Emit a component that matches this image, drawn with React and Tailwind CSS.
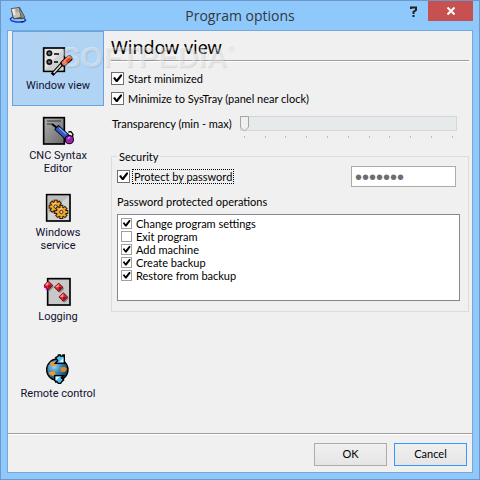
import React, { useState } from "react";

const ViewIcon = () => (
  <svg width="32" height="30" viewBox="126 135 96 90" aria-hidden="true">
    <rect x="131" y="141" width="62" height="70" fill="#e4e4e4" stroke="#000" strokeWidth="5" />
    <path d="M134 208L190 144V208Z" fill="#d0d0d0" />
    <circle cx="148" cy="157" r="9" fill="#111" />
    <circle cx="148" cy="157" r="4" fill="#6b7075" />
    <circle cx="148" cy="183" r="9" fill="#111" />
    <circle cx="148" cy="183" r="4" fill="#6b7075" />
    <path d="M162 159H177M162 183H174" stroke="#000" strokeWidth="4" />
    <path d="M188 186L160 217" stroke="#000" strokeWidth="11" strokeLinecap="square" />
    <path d="M188 186L161 216" stroke="#d8d8d0" strokeWidth="5" />
    <path d="M191 187L208 172" stroke="#000" strokeWidth="19" strokeLinecap="round" />
    <path d="M192 186L208 172" stroke="#e04415" strokeWidth="14" strokeLinecap="round" />
    <path d="M192 180L206 168" stroke="#ff9468" strokeWidth="4" />
  </svg>
);

const SyntaxIcon = () => (
  <svg width="32" height="30" viewBox="126 36 96 90" aria-hidden="true">
    <defs>
      <linearGradient id="plate" x1="0" y1="0" x2="1" y2="1">
        <stop offset="0" stopColor="#b0b0b0" />
        <stop offset="1" stopColor="#686868" />
      </linearGradient>
    </defs>
    <rect x="131" y="41" width="62" height="79" fill="url(#plate)" stroke="#000" strokeWidth="5" />
    <path d="M141 51H183M141 60H156" stroke="#333" strokeWidth="3" />
    <path d="M156 60L178 77" stroke="#000" strokeWidth="6" />
    <path d="M176 76L204 101" stroke="#000" strokeWidth="19" strokeLinecap="square" />
    <path d="M176 76L198 96" stroke="#2f5ac8" strokeWidth="14" strokeLinecap="square" />
    <path d="M178 72L198 90" stroke="#78a4f0" strokeWidth="4" />
    <path d="M205 84L213 83L219 91L217 99" fill="none" stroke="#000" strokeWidth="4" />
    <circle cx="208" cy="107" r="14" fill="#000" />
    <circle cx="208" cy="107" r="11" fill="#9d20b0" />
    <path d="M203 105L210 99" stroke="#e080f0" strokeWidth="4" />
  </svg>
);

const teeth = [0, 45, 90, 135];

const Gear = ({ x, y }) => (
  <g transform={`translate(${x} ${y})`}>
    {teeth.map((a) => (
      <rect key={a} x="-6" y="-21" width="12" height="42" fill="#2a1c04" transform={`rotate(${a})`} />
    ))}
    <circle r="16" fill="#2a1c04" />
    {teeth.map((a) => (
      <rect key={a} x="-3" y="-18" width="6" height="36" fill="#f2a72c" transform={`rotate(${a})`} />
    ))}
    <circle r="13" fill="#f2a72c" />
    <path d="M-9 -5A10 10 0 0 1 2 -10" fill="none" stroke="#ffd888" strokeWidth="3" />
    <circle r="5" fill="#d8d8d8" stroke="#4a3208" strokeWidth="3" />
  </g>
);

const ServiceIcon = () => (
  <svg width="32" height="30" viewBox="126 267 96 90" aria-hidden="true">
    <rect x="140" y="272" width="70" height="79" fill="#d2d2d2" stroke="#000" strokeWidth="5" />
    <path d="M143 275H208L143 330Z" fill="#bdbdbd" />
    <Gear x={167} y={308} />
    <Gear x={184} y={324} />
  </svg>
);

const Diamond = ({ x, y }) => (
  <g transform={`translate(${x} ${y})`}>
    <path d="M4 -9L17 4L4 17L-8 5Z" fill="#888" />
    <path d="M0 -14L14 0L0 14L-14 0Z" fill="#3a0000" />
    <path d="M0 -12L12 0L0 12L-12 0Z" fill="#e02832" />
    <path d="M0 -11L-10 0H0Z" fill="#ff9a9a" />
    <path d="M0 0H10L0 10Z" fill="#980a14" />
  </g>
);

const LoggingIcon = () => (
  <svg width="32" height="30" viewBox="126 51 96 90" aria-hidden="true">
    <rect x="143" y="56" width="67" height="79" fill="#c8c8c8" stroke="#000" strokeWidth="5" />
    <path d="M132 78H143V90H137V84H132Z" fill="#f000e0" />
    <Diamond x={145} y={76} />
    <Diamond x={176} y={82} />
    <Diamond x={190} y={111} />
  </svg>
);

const RemoteIcon = () => (
  <svg width="32" height="30" viewBox="126 281 96 90" aria-hidden="true">
    <defs>
      <radialGradient id="globe" cx="0.35" cy="0.35" r="0.7">
        <stop offset="0" stopColor="#9cd4f4" />
        <stop offset="0.45" stopColor="#3a88b8" />
        <stop offset="1" stopColor="#123a5c" />
      </radialGradient>
    </defs>
    <circle cx="172" cy="328" r="32" fill="url(#globe)" stroke="#000" strokeWidth="4" />
    <path d="M152 304L166 304L168 313L158 320L151 314Z" fill="#e59a38" />
    <path d="M181 322L194 319L201 325L195 335L183 334Z" fill="#d8882a" />
    <path d="M147 335L163 333L167 341L159 347L149 343Z" fill="#f09a28" />
    <path d="M167 292L175 287V284H181V287H189V284H193V309H166L173 301Z" fill="#54c0ec" stroke="#000" strokeWidth="4" />
    <path d="M178 305L190 292V305Z" fill="#d8f6ff" />
    <path d="M164 346H190L184 352L191 359L185 364L182 369H175L172 365H167V361H164Z" fill="#54c0ec" stroke="#000" strokeWidth="4" />
    <path d="M167 349H181L167 361Z" fill="#e4faff" />
  </svg>
);

const AppIcon = () => (
  <svg width="18" height="18" viewBox="27 18 54 54" aria-hidden="true">
    <path d="M38 51L31 57L34 62L48 66H68L77 61L73 55" fill="none" stroke="#1238e0" strokeWidth="4" />
    <path d="M32 25L59 21L76 52L70 57L40 58L37 48Z" fill="#4a4a44" />
    <path d="M34 27L56 24L62 51L42 55Z" fill="#c4c2b8" />
    <path d="M57 24L74 52L65 54Z" fill="#8c8a80" />
    <path d="M37 27L43 26L46 45L41 46Z" fill="#f0eee4" />
    <path d="M47 29L54 28M48 34L56 33" stroke="#77756c" strokeWidth="2" />
    <path d="M62 65H74" stroke="#223" strokeWidth="3" />
  </svg>
);

const sections = [
  { id: "view", label: "Window view", Icon: ViewIcon },
  { id: "syntax", label: "CNC Syntax Editor", Icon: SyntaxIcon },
  { id: "service", label: "Windows service", Icon: ServiceIcon },
  { id: "logging", label: "Logging", Icon: LoggingIcon },
  { id: "remote", label: "Remote control", Icon: RemoteIcon },
];

const operations = [
  { label: "Change program settings", checked: true },
  { label: "Exit program", checked: false },
  { label: "Add machine", checked: true },
  { label: "Create backup", checked: true },
  { label: "Restore from backup", checked: true },
];

const Check = ({ label, defaultChecked = true, small, focused }) => (
  <label className={`flex items-center gap-[3px] ${small ? "h-[13px]" : "h-5"}`}>
    <span className="relative flex shrink-0">
      <input
        type="checkbox"
        defaultChecked={defaultChecked}
        className={`peer appearance-none border bg-white ${
          small ? "size-[11px] border-[#a0a0a0]" : "size-[13px] border-[#707070]"
        }`}
      />
      <svg
        viewBox="0 0 13 13"
        className="pointer-events-none absolute inset-0 hidden size-full peer-checked:block"
        aria-hidden="true"
      >
        <path d="M2 6L4 5L5.500 7.500L9.500 2.500H11V4L6.500 10H5Z" fill="#000" />
      </svg>
    </span>
    <span className={`px-px leading-[13px] ${focused ? "outline outline-1 outline-dotted outline-black" : ""}`}>
      {label}
    </span>
  </label>
);

const TransparencySlider = () => {
  const [value, setValue] = useState(0);

  return (
    <div className="flex items-start gap-2 pt-2 pr-3">
      <label htmlFor="transparency" className="shrink-0 pl-px leading-4">
        Transparency (min - max)
      </label>
      <div className="min-w-0 flex-1">
        <div className="relative h-[15px] border border-[#d6d6d6] bg-[#e7eaea]">
          <input
            id="transparency"
            type="range"
            min="0"
            max="10"
            value={value}
            onChange={(e) => setValue(Number(e.target.value))}
            className="absolute inset-0 size-full opacity-0"
          />
          <div className="pointer-events-none absolute -top-px right-2 -left-px">
            <svg
              width="9"
              height="16"
              viewBox="0 0 9 16"
              className="relative"
              style={{ left: `${value * 10}%` }}
              aria-hidden="true"
            >
              <path d="M0.500 0.500H8.500V11L4.500 15L0.500 11Z" fill="#f0f0f0" stroke="#a5a5a5" />
            </svg>
          </div>
        </div>
        <div className="flex justify-between px-1 pt-[5px]">
          {Array.from({ length: 11 }, (_, i) => (
            <span key={i} className="h-[2px] w-px bg-[#bbb]" />
          ))}
        </div>
      </div>
    </div>
  );
};

const App = () => {
  const [active, setActive] = useState("view");

  return (
    <div className="flex min-h-screen flex-col border border-[#6b98c8] bg-[#8fc8fa] px-[6px] pb-[6px] font-[Lato,sans-serif] text-[11px] text-black">
      <header className="relative flex h-[29px] items-start justify-between">
        <span className="pt-[5px] pl-[2px]">
          <AppIcon />
        </span>
        <h1 className="pointer-events-none absolute inset-x-0 top-[5px] text-center font-['Open_Sans',sans-serif] text-[14px] leading-5 text-[#303840]">
          Program options
        </h1>
        <div className="flex">
          <button aria-label="Help" className="flex h-[20px] w-7 items-center justify-center">
            <svg width="8" height="11" viewBox="0 0 8 11" aria-hidden="true">
              <path d="M1 3V1.500H6V4L3.500 6V8" fill="none" stroke="#222" strokeWidth="2" />
              <path d="M2.500 9H4.500V11H2.500Z" fill="#222" />
            </svg>
          </button>
          <button aria-label="Close" className="flex h-[20px] w-[45px] items-center justify-center bg-[#c75050]">
            <svg width="8" height="8" viewBox="0 0 8 8" aria-hidden="true">
              <path d="M0.500 0.500L7.500 7.500M7.500 0.500L0.500 7.500" stroke="#fff" strokeWidth="2" />
            </svg>
          </button>
        </div>
      </header>

      <div className="relative flex flex-1 flex-col border border-[#76a7d8] bg-[#f0f0f0]">
        <div className="flex flex-1">
          <nav className="flex w-24 shrink-0 flex-col gap-[2px] pl-1">
            {sections.map(({ id, label, Icon }) => (
              <button
                key={id}
                onClick={() => setActive(id)}
                className={`flex h-[75px] flex-col items-center justify-center border px-1 font-[Roboto,sans-serif] text-[11px] leading-[13px] text-[#101030] ${
                  active === id ? "border-[#66a3e0] bg-[#b2d4f4]" : "border-transparent"
                }`}
              >
                <Icon />
                <span className="mt-[3px] max-w-[78px]">{label}</span>
              </button>
            ))}
          </nav>

          <main className="min-w-0 flex-1 pr-[3px] pl-[7px]">
            <h2 className="mb-[7px] h-[30px] border-b border-[#a0a0a0] font-['Noto_Sans',sans-serif] text-[18px] leading-[32px] shadow-[0_1px_0_#fff]">
              Window view
            </h2>
            <Check label="Start minimized" />
            <Check label="Minimize to SysTray (panel near clock)" />
            <TransparencySlider />

            <fieldset className="mt-3 border border-[#dcdcdc] px-[5px] pb-[10px]">
              <legend className="px-[2px] leading-[13px]">Security</legend>
              <div className="flex items-center justify-between pt-[3px] pr-[7px]">
                <Check label="Protect by password" focused />
                <input
                  type="password"
                  aria-label="Password"
                  defaultValue="1234567"
                  className="h-[21px] w-[105px] border border-[#ababab] bg-white px-[3px] font-['Liberation_Sans',sans-serif] text-[20px] text-[#6d6d6d]"
                />
              </div>
              <div id="ops-title" className="pt-2 pb-[6px] leading-[13px]">
                Password protected operations
              </div>
              <div
                role="group"
                aria-labelledby="ops-title"
                className="mr-[3px] min-h-[87px] border border-[#828790] bg-white px-[3px] py-[2px]"
              >
                {operations.map((op) => (
                  <Check key={op.label} label={op.label} defaultChecked={op.checked} small />
                ))}
              </div>
            </fieldset>
          </main>
        </div>

        <footer className="flex justify-end gap-[7px] border-t border-[#a0a0a0] pt-[9px] pr-[5px] pb-[6px] shadow-[inset_0_1px_0_#fff]">
          <button className="h-[23px] w-[73px] border border-[#acacac] bg-linear-to-b from-[#f0f0f0] to-[#e5e5e5]">
            OK
          </button>
          <button className="h-[23px] w-[73px] border border-[#3399ff] bg-linear-to-b from-[#f0f0f0] to-[#e5e5e5]">
            Cancel
          </button>
        </footer>

        <div className="pointer-events-none absolute top-[10px] left-[53px] flex items-start font-['Liberation_Sans',sans-serif] font-bold text-white/40 text-shadow-[1px_1px_1px_rgb(0_0_0/0.1)]">
          <span className="text-[29px] leading-8">SOFTPEDIA</span>
          <span className="text-[9px] leading-4">®</span>
        </div>
      </div>
    </div>
  );
};

export default App;
